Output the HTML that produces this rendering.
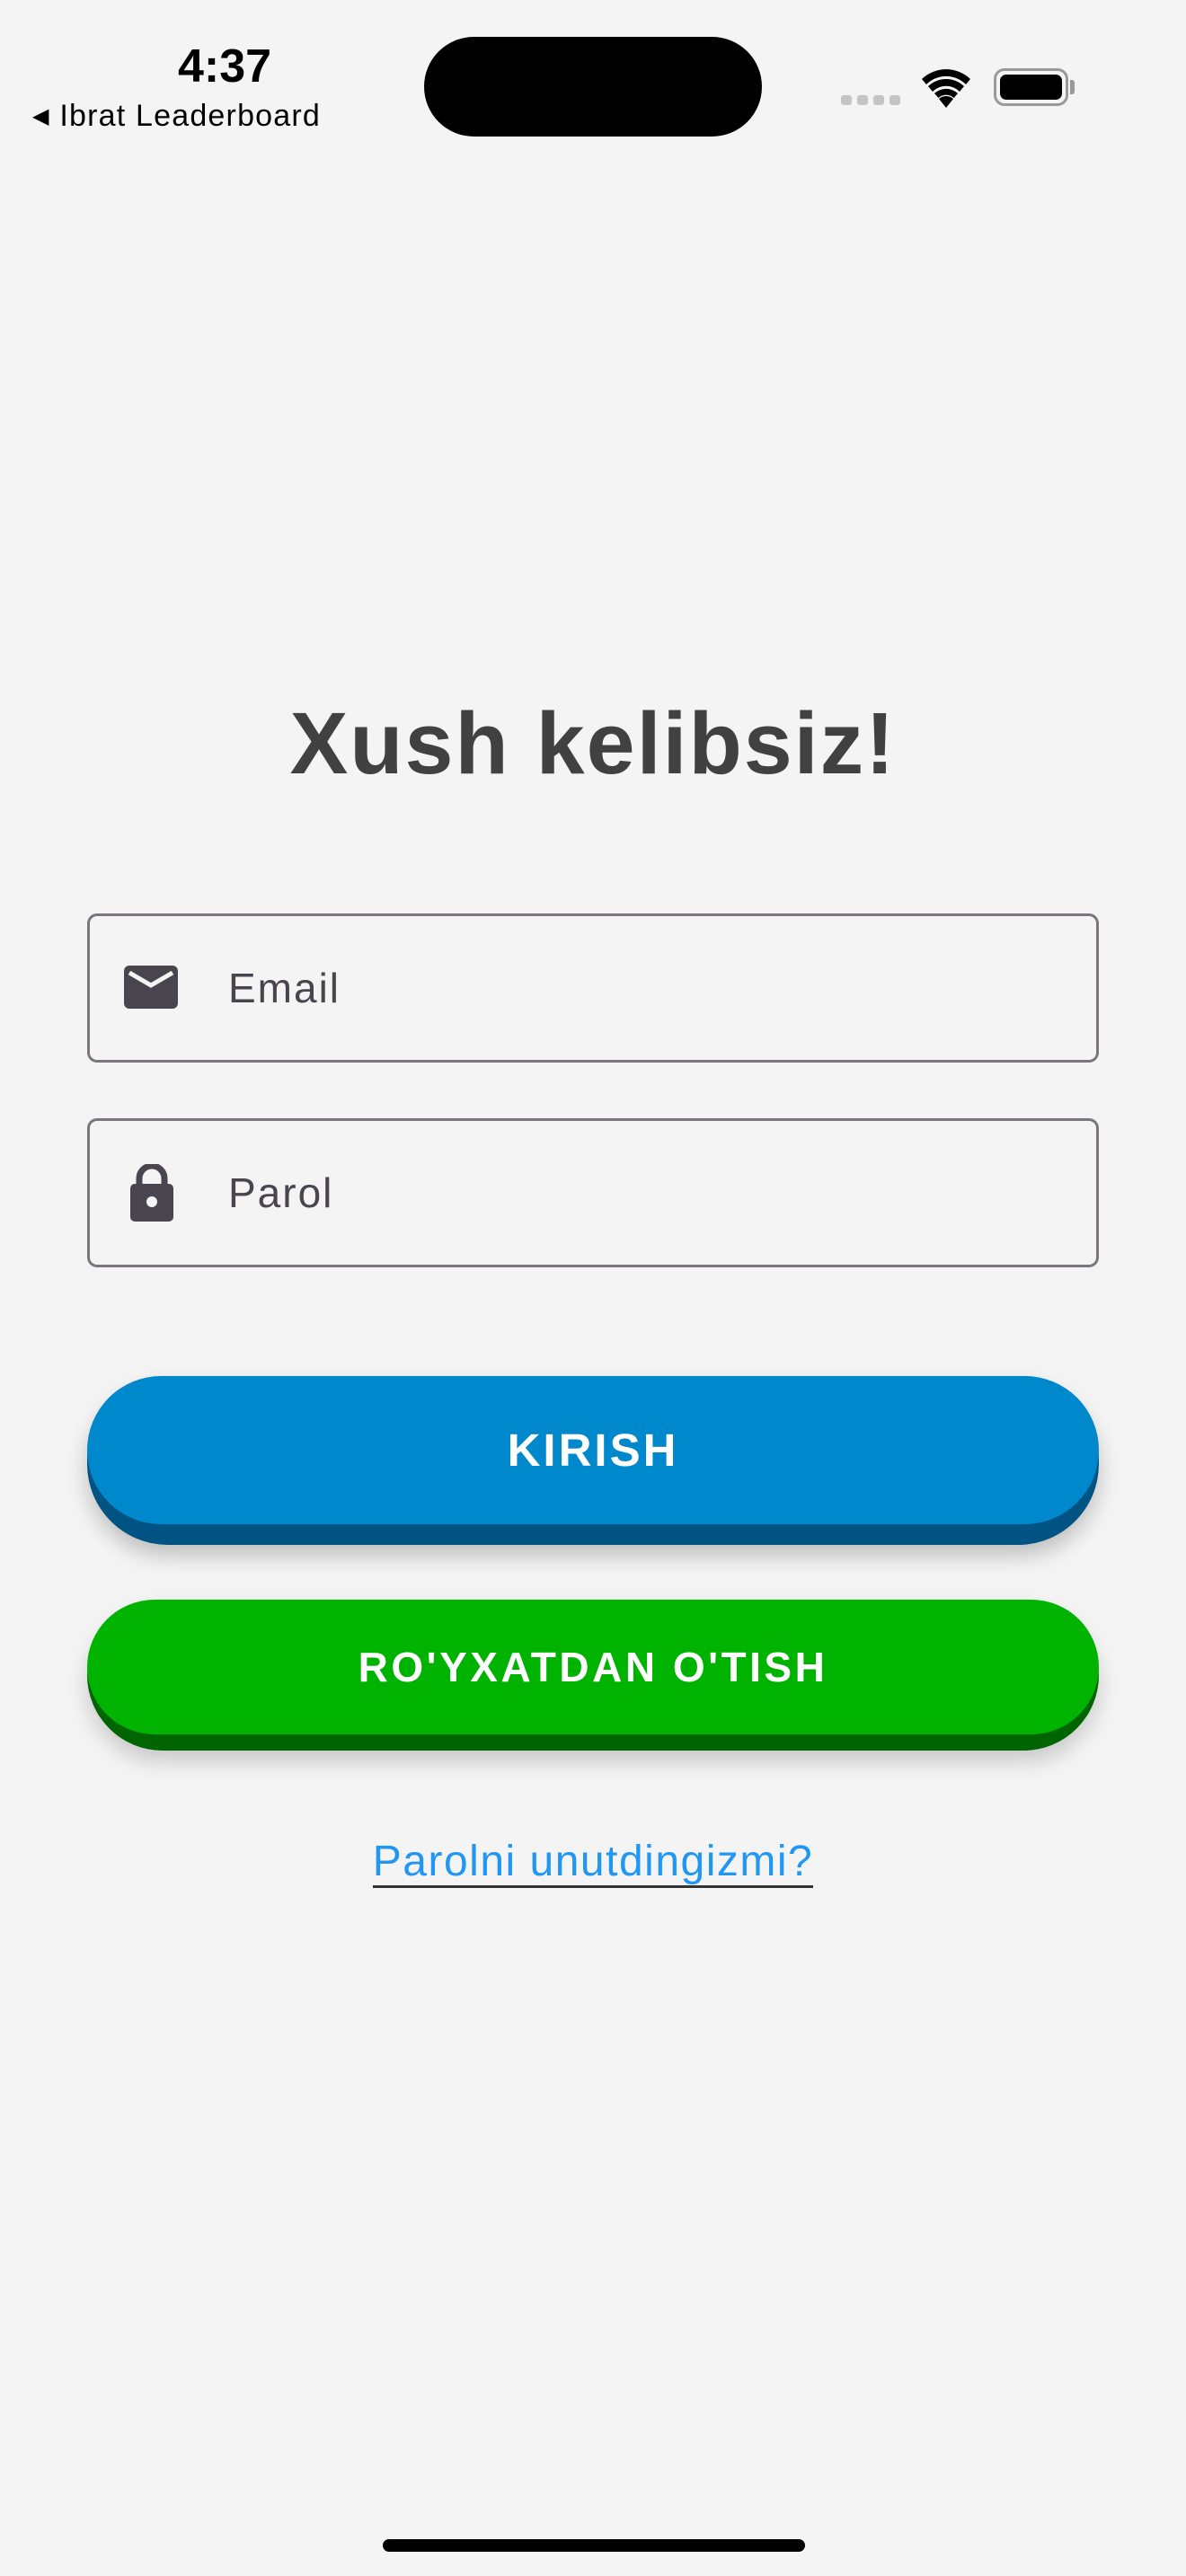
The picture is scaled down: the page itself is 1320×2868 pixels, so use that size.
<!DOCTYPE html>
<html><head><meta charset="utf-8"><style>
*{margin:0;padding:0;box-sizing:border-box}
html,body{width:1320px;height:2868px;background:#f4f4f4;font-family:"Liberation Sans",sans-serif;overflow:hidden}
.a{position:absolute}
.field{position:absolute;left:97px;width:1126px;height:166px;border:3px solid #7a757e;border-radius:11px}
.field span{position:absolute;left:154px;top:50%;transform:translateY(-50%);font-size:46px;color:#49454f;letter-spacing:2px}
.btn{position:absolute;left:97px;width:1126px;border-radius:90px;color:#fff;font-weight:bold;text-align:center;letter-spacing:3px}
</style></head><body>
<div class="a" style="left:190px;top:44px;width:120px;text-align:center;font-size:52px;font-weight:bold;color:#000">4:37</div>
<div class="a" style="left:36px;top:110px;font-size:34px;color:#000;white-space:nowrap;letter-spacing:1.2px"><span style="font-size:24px;position:relative;top:-3px">◀</span> Ibrat Leaderboard</div>
<div class="a" style="left:472px;top:41px;width:376px;height:111px;background:#000;border-radius:56px"></div>
<div class="a" style="left:936px;top:106px;width:12px;height:11px;background:#c4c4c4;border-radius:3px"></div>
<div class="a" style="left:954px;top:106px;width:12px;height:11px;background:#c4c4c4;border-radius:3px"></div>
<div class="a" style="left:972px;top:106px;width:12px;height:11px;background:#c4c4c4;border-radius:3px"></div>
<div class="a" style="left:990px;top:106px;width:12px;height:11px;background:#c4c4c4;border-radius:3px"></div>
<svg class="a" style="left:1024px;top:76px" width="58" height="44" viewBox="0 0 58 44"><path d="M29 44 L21 34 A12 12 0 0 1 37 34 Z" fill="#000"/><path d="M16 28 A19 19 0 0 1 42 28 L37.5 33 A12.5 12.5 0 0 0 20.5 33 Z" fill="#000"/><path d="M9 20 A29 29 0 0 1 49 20 L44 26 A21 21 0 0 0 14 26 Z" fill="#000"/><path d="M2 12 A39 39 0 0 1 56 12 L51 18 A31 31 0 0 0 7 18 Z" fill="#000"/></svg>
<div class="a" style="left:1106px;top:76px;width:83px;height:42px;border:3px solid #999;border-radius:12px;padding:4px"><div style="width:100%;height:100%;background:#000;border-radius:7px"></div></div>
<div class="a" style="left:1191px;top:89px;width:5px;height:16px;background:#999;border-radius:0 3px 3px 0"></div>
<div class="a" style="left:0;top:772px;width:1320px;text-align:center;font-size:97px;font-weight:bold;color:#414141;letter-spacing:2px">Xush kelibsiz!</div>
<div class="field" style="top:1017px"><svg class="a" style="left:38px;top:55px" width="62" height="52" viewBox="0 0 62 52"><rect x="0" y="0" width="60" height="48" rx="6" fill="#49454f"/><path d="M6 8 L30 22 L54 8" stroke="#f4f4f4" stroke-width="5" fill="none"/></svg><span>Email</span></div>
<div class="field" style="top:1245px"><svg class="a" style="left:43px;top:48px" width="52" height="66" viewBox="0 0 52 66"><path d="M12 24 V16 A14 14 0 0 1 40 16 V24" stroke="#49454f" stroke-width="7" fill="none"/><rect x="2" y="22" width="48" height="42" rx="5" fill="#49454f"/><circle cx="26" cy="42" r="6" fill="#f4f4f4"/></svg><span>Parol</span></div>
<div class="btn" style="top:1532px;height:188px;background:#005383;box-shadow:0 12px 24px rgba(0,0,0,.22)"></div>
<div class="btn" style="top:1532px;height:165px;background:#0088cc;line-height:165px;font-size:51px">KIRISH</div>
<div class="btn" style="top:1781px;height:168px;background:#006400;box-shadow:0 12px 24px rgba(0,0,0,.18)"></div>
<div class="btn" style="top:1781px;height:150px;background:#00b300;line-height:150px;font-size:46px;letter-spacing:3.5px">RO'YXATDAN O'TISH</div>
<div class="a" style="left:0;top:2045px;width:1320px;text-align:center;font-size:48px;color:#2196f3;letter-spacing:1.5px"><span style="border-bottom:3px solid #333">Parolni unutdingizmi?</span></div>
<div class="a" style="left:426px;top:2827px;width:470px;height:14px;background:#000;border-radius:7px"></div>
</body></html>
